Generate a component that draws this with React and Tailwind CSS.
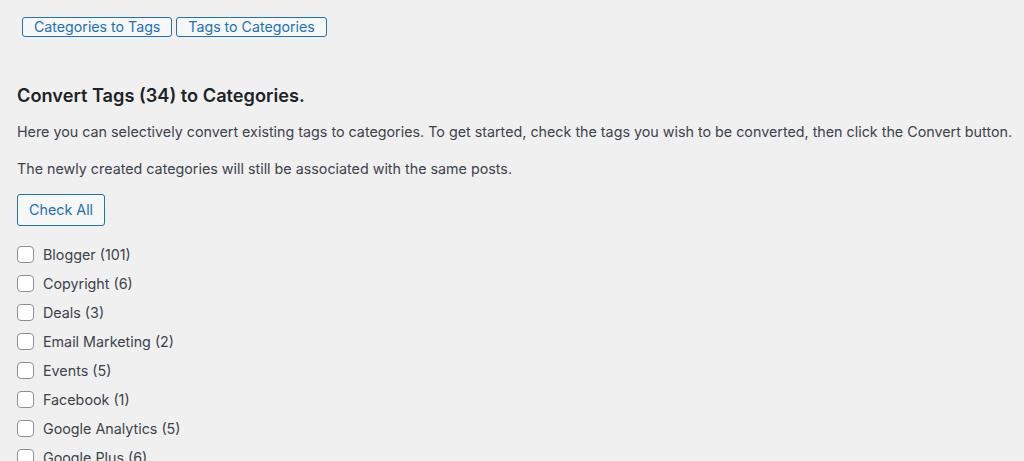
import React from "react";

const tags = [
  "Blogger (101)",
  "Copyright (6)",
  "Deals (3)",
  "Email Marketing (2)",
  "Events (5)",
  "Facebook (1)",
  "Google Analytics (5)",
  "Google Plus (6)",
];

export default function App() {
  return (
    <div
      className="bg-[#f0f0f1] text-[#3c434a] px-[17px] pt-[17px] overflow-hidden h-[461px]"
      style={{ fontFamily: 'Inter, "Noto Sans", "Liberation Sans", sans-serif' }}
    >
      <div className="flex gap-[4px] pl-[5px]">
        <button className="h-[20px] px-[11px] border border-[#2271b1] rounded-[3px] bg-[#f6f7f7] text-[#2271b1] text-[14.2px] leading-[18px]">
          Categories to Tags
        </button>
        <button className="h-[20px] px-[11px] border border-[#2271b1] rounded-[3px] bg-[#f6f7f7] text-[#2271b1] text-[14.2px] leading-[18px]">
          Tags to Categories
        </button>
      </div>
      <h2 className="mt-[46px] text-[18.2px] leading-[24px] font-semibold text-[#1d2327]">
        Convert Tags (34) to Categories.
      </h2>
      <p className="mt-[15px] text-[14.3px] leading-[20px] whitespace-nowrap">
        Here you can selectively convert existing tags to categories. To get started, check the tags you wish to be converted, then click the Convert button.
      </p>
      <p className="mt-[17px] text-[14.3px] leading-[20px]">
        The newly created categories will still be associated with the same posts.
      </p>
      <button className="mt-[15px] h-[32px] px-[11px] border border-[#2271b1] rounded-[3px] bg-[#f6f7f7] text-[#2271b1] text-[14.3px]">
        Check All
      </button>
      <ul className="mt-[20px] flex flex-col gap-[12px]">
        {tags.map((t) => (
          <li key={t} className="flex items-center gap-[9px] h-[17px]">
            <span className="w-[17px] h-[17px] rounded-[4px] border border-[#8c8f94] bg-white shrink-0" />
            <span className="text-[14.3px] leading-[17px]">{t}</span>
          </li>
        ))}
      </ul>
    </div>
  );
}
